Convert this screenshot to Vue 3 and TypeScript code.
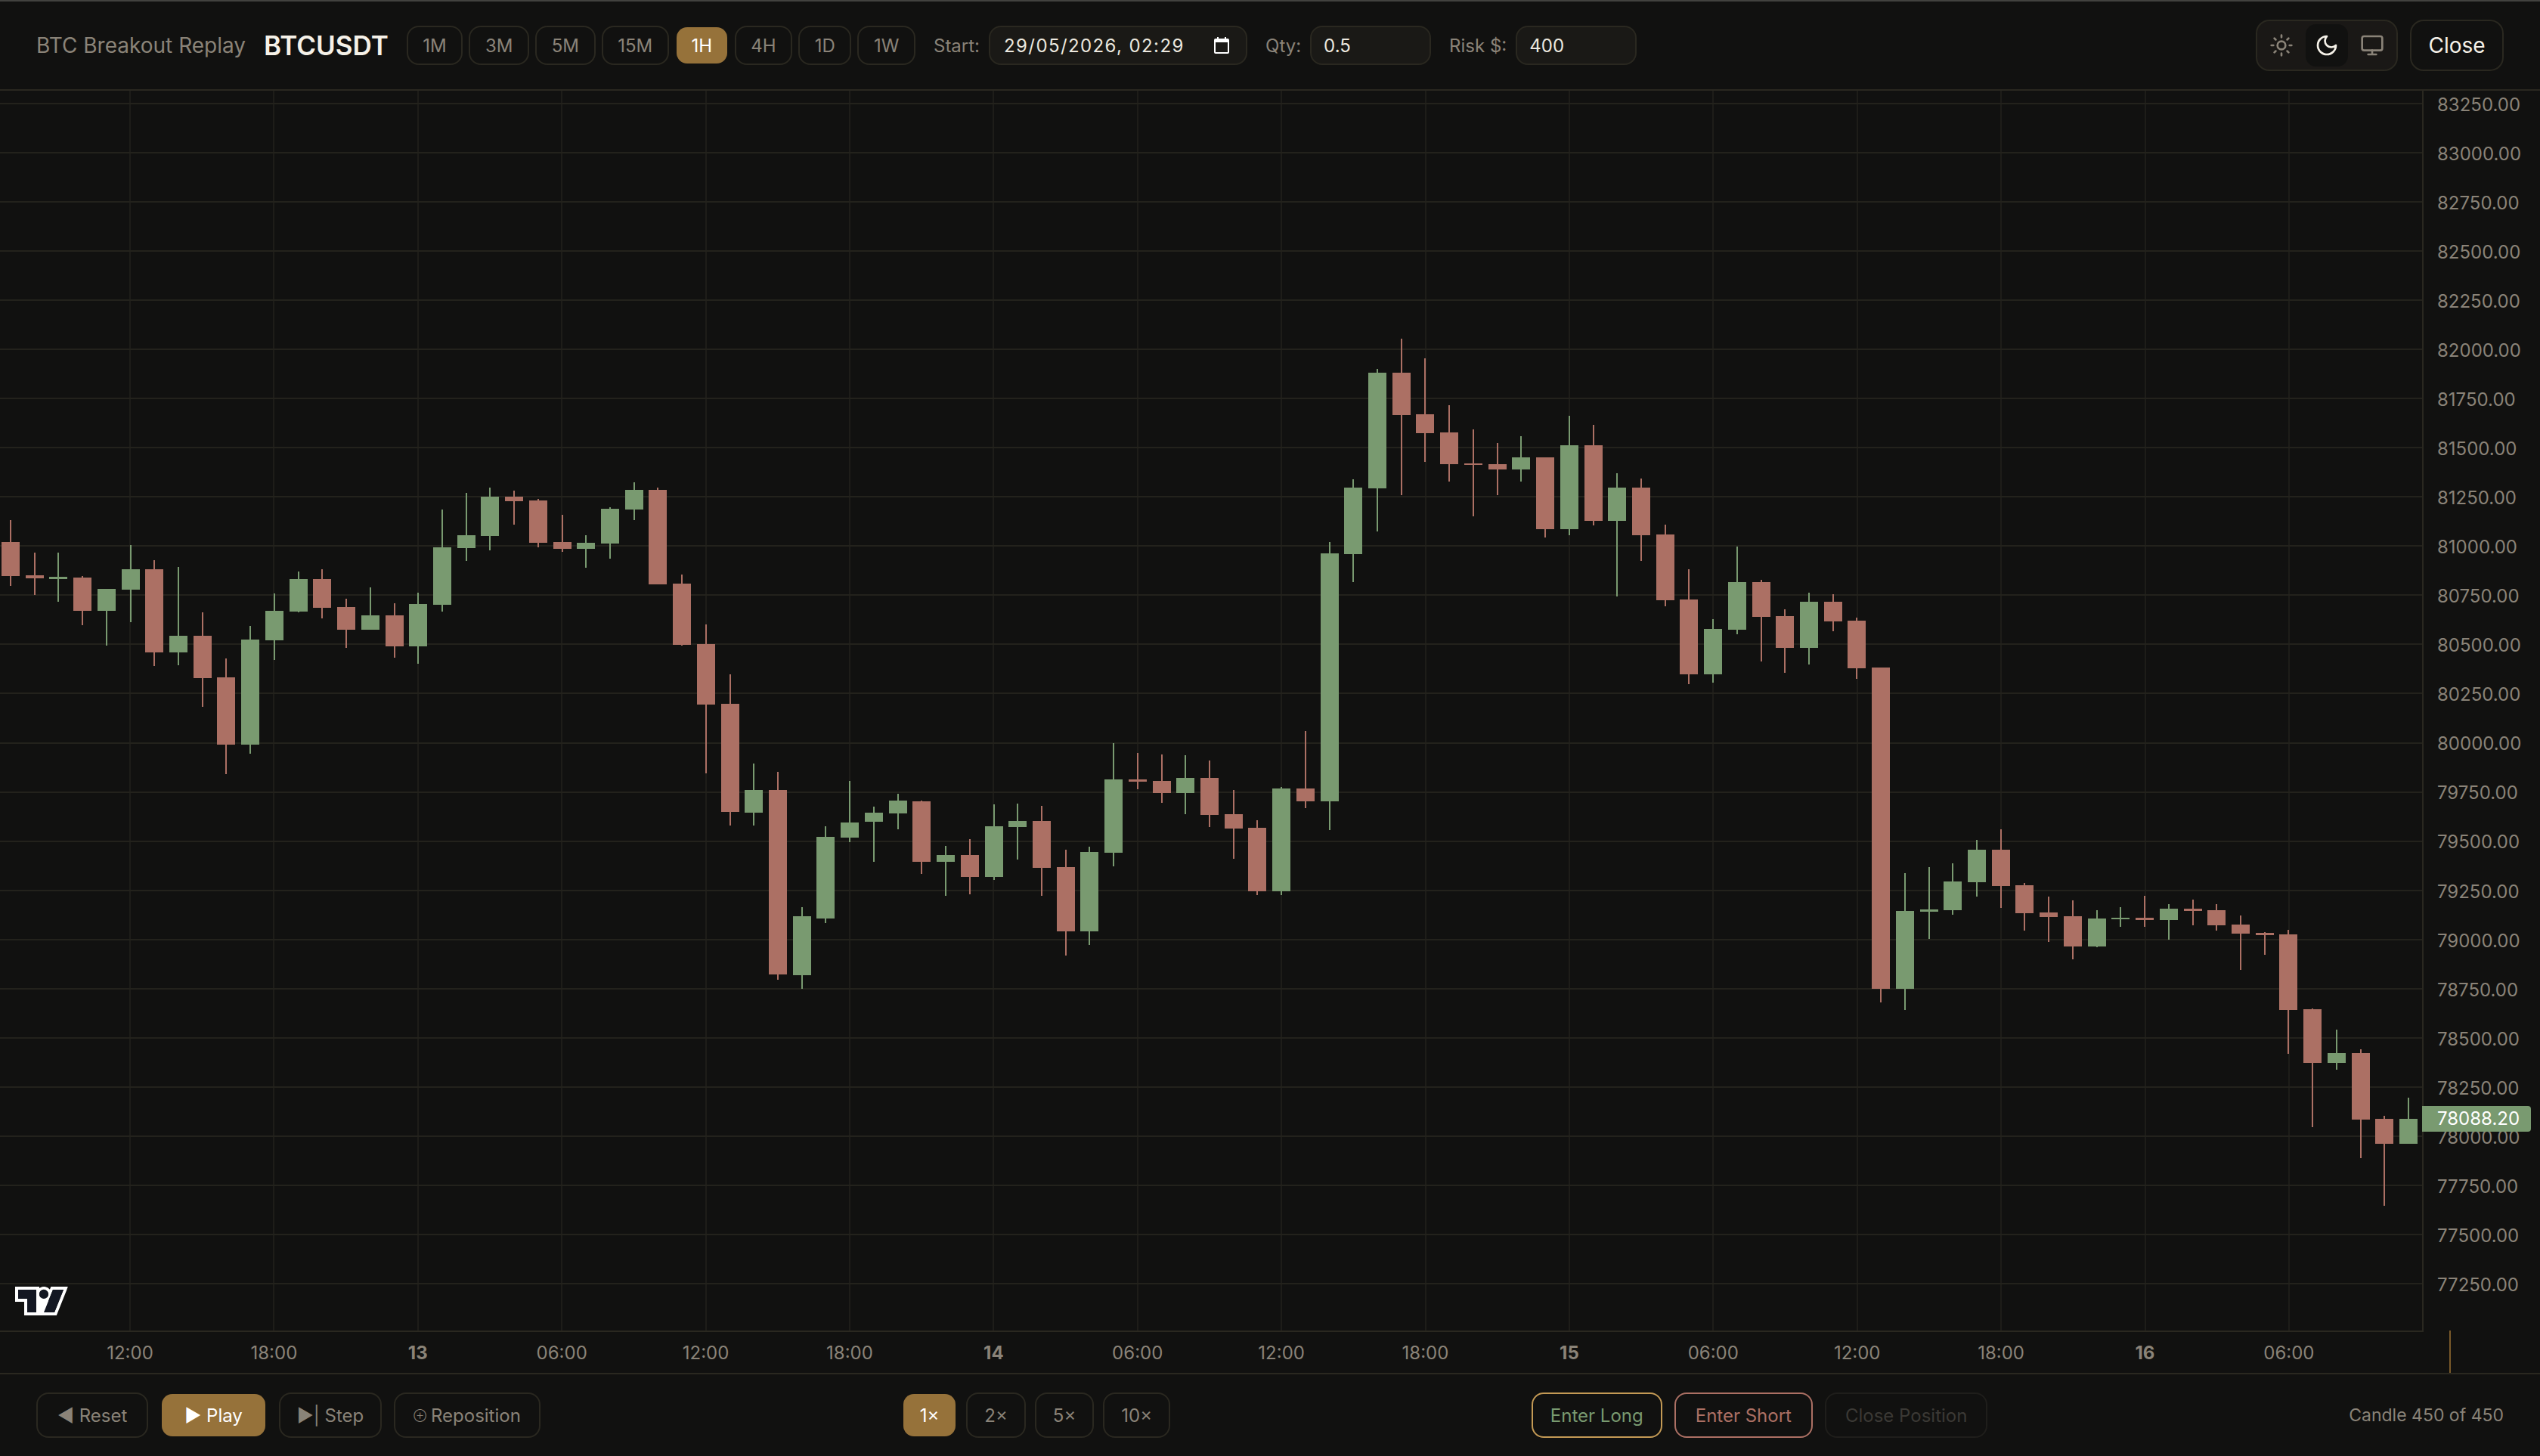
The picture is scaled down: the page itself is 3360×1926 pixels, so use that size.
<script setup lang="ts">
import { computed } from 'vue';

// [colour, wick top, body top, body bottom, wick bottom], page pixels
type Candle = [string, number, number, number, number];

const candles: Candle[] = [
  ['r', 688, 717, 762, 775], ['r', 731, 761, 765, 787], ['g', 731, 763, 766, 796], ['r', 762, 764, 808, 827],
  ['g', 779, 779, 808, 854], ['g', 721, 753, 780, 823], ['r', 741, 753, 863, 881], ['g', 750, 841, 863, 880],
  ['r', 810, 841, 897, 935], ['r', 871, 896, 985, 1024], ['g', 828, 846, 985, 997], ['g', 785, 808, 847, 873],
  ['g', 756, 766, 809, 810], ['r', 753, 766, 804, 818], ['r', 792, 803, 833, 857], ['g', 777, 814, 833, 833],
  ['r', 798, 814, 855, 870], ['g', 784, 799, 855, 878], ['g', 674, 724, 800, 809], ['g', 652, 708, 725, 742],
  ['g', 645, 657, 709, 728], ['r', 649, 657, 663, 694], ['r', 660, 662, 718, 724], ['r', 681, 717, 726, 730],
  ['g', 708, 718, 726, 751], ['g', 671, 673, 719, 739], ['g', 638, 648, 674, 688], ['r', 645, 648, 773, 773],
  ['r', 760, 772, 853, 854], ['r', 826, 852, 932, 1023], ['r', 892, 931, 1074, 1092], ['g', 1010, 1045, 1075, 1092],
  ['r', 1021, 1045, 1289, 1296], ['g', 1200, 1212, 1290, 1308], ['g', 1093, 1107, 1215, 1221], ['g', 1033, 1088, 1108, 1114],
  ['g', 1067, 1075, 1087, 1140], ['g', 1050, 1059, 1076, 1097], ['r', 1059, 1060, 1140, 1156], ['g', 1119, 1131, 1140, 1185],
  ['r', 1110, 1131, 1160, 1183], ['g', 1064, 1093, 1160, 1164], ['g', 1063, 1086, 1094, 1137], ['r', 1066, 1086, 1148, 1185],
  ['r', 1124, 1147, 1232, 1264], ['g', 1120, 1127, 1232, 1250], ['g', 983, 1031, 1128, 1146], ['r', 996, 1031, 1034, 1044],
  ['r', 998, 1033, 1049, 1062], ['g', 999, 1029, 1049, 1077], ['r', 1006, 1029, 1078, 1094], ['r', 1045, 1077, 1096, 1136],
  ['r', 1085, 1095, 1179, 1184], ['g', 1041, 1043, 1179, 1184], ['r', 967, 1043, 1060, 1069], ['g', 717, 732, 1060, 1098],
  ['g', 634, 645, 733, 770], ['g', 488, 493, 646, 703], ['r', 448, 493, 549, 655], ['r', 474, 548, 573, 611],
  ['r', 536, 572, 614, 637], ['r', 568, 613, 615, 683], ['r', 586, 614, 621, 655], ['g', 577, 605, 621, 637],
  ['r', 605, 605, 700, 711], ['g', 550, 589, 700, 708], ['r', 562, 589, 689, 695], ['g', 626, 645, 689, 789],
  ['r', 633, 645, 708, 742], ['r', 694, 707, 794, 802], ['r', 753, 793, 892, 905], ['g', 819, 832, 892, 903],
  ['g', 723, 770, 833, 839], ['r', 767, 770, 816, 875], ['r', 806, 815, 857, 890], ['g', 784, 796, 857, 879],
  ['r', 786, 796, 822, 835], ['r', 817, 821, 884, 898], ['r', 883, 883, 1308, 1326], ['g', 1155, 1205, 1308, 1336],
  ['g', 1147, 1203, 1206, 1242], ['g', 1142, 1166, 1204, 1210], ['g', 1111, 1124, 1167, 1186], ['r', 1097, 1124, 1172, 1201],
  ['r', 1168, 1171, 1208, 1231], ['r', 1186, 1207, 1213, 1246], ['r', 1191, 1212, 1252, 1269], ['g', 1204, 1215, 1252, 1253],
  ['g', 1200, 1214, 1216, 1226], ['r', 1185, 1214, 1217, 1226], ['g', 1196, 1202, 1217, 1243], ['r', 1190, 1202, 1205, 1224],
  ['r', 1196, 1204, 1224, 1231], ['r', 1211, 1223, 1235, 1283], ['r', 1233, 1234, 1237, 1263], ['r', 1230, 1236, 1336, 1394],
  ['r', 1334, 1335, 1406, 1491], ['g', 1362, 1393, 1406, 1415], ['r', 1388, 1393, 1481, 1532], ['r', 1476, 1480, 1513, 1595],
  ['g', 1452, 1480, 1513, 1513],
];

const PLOT_TOP = 120;
const TICK_SPACING = 65.04;
const CANDLE_STEP = 31.72;

const timeframes = ['1M', '3M', '5M', '15M', '1H', '4H', '1D', '1W'];
const speeds = ['1×', '2×', '5×', '10×'];

const timeLabels = [
  { text: '12:00' }, { text: '18:00' }, { text: '13', day: true }, { text: '06:00' },
  { text: '12:00' }, { text: '18:00' }, { text: '14', day: true }, { text: '06:00' },
  { text: '12:00' }, { text: '18:00' }, { text: '15', day: true }, { text: '06:00' },
  { text: '12:00' }, { text: '18:00' }, { text: '16', day: true }, { text: '06:00' },
];

const priceTicks = computed(() => {
  const ticks: string[] = [];
  for (let p = 83250; p >= 77250; p -= 250) ticks.push(p.toFixed(2));
  return ticks;
});

const gridY = computed(() => priceTicks.value.map((_, i) => Math.round(137 + TICK_SPACING * i) - PLOT_TOP));
const gridX = computed(() => timeLabels.map((_, i) => Math.round(172 + 190.4 * i)));

const bars = computed(() =>
  candles.map(([c, high, top, bottom, low], i) => ({
    x: Math.round(14 + CANDLE_STEP * i),
    fill: c === 'g' ? '#799a70' : '#ac7064',
    high: high - PLOT_TOP,
    top: top - PLOT_TOP,
    bodyHeight: bottom - top,
    wickHeight: low - high,
  })),
);

const lastPrice = 78088.2;
const lastPriceTop = computed(() => 137 + ((83250 - lastPrice) / 250) * TICK_SPACING - 17 - PLOT_TOP);
</script>

<template>
  <div class="app">
    <header class="topbar">
      <span class="title">BTC Breakout Replay</span>
      <span class="symbol">BTCUSDT</span>
      <div class="tf-group">
        <button v-for="tf in timeframes" :key="tf" class="btn tf" :class="{ active: tf === '1H' }">{{ tf }}</button>
      </div>
      <label class="field">
        <span>Start:</span>
        <div class="input date">
          <span class="date-text">29/05/2026, 02:29</span>
          <svg class="cal" width="20" height="22" viewBox="0 0 20 22">
            <path fill="#fff" d="M4 0h2v2h8V0h2v2h2a2 2 0 0 1 2 2v16a2 2 0 0 1-2 2H2a2 2 0 0 1-2-2V4a2 2 0 0 1 2-2h2V0Z" />
            <rect x="2" y="7" width="16" height="13" fill="#1a1916" />
          </svg>
        </div>
      </label>
      <label class="field">
        <span>Qty:</span>
        <div class="input num">0.5</div>
      </label>
      <label class="field">
        <span>Risk $:</span>
        <div class="input num">400</div>
      </label>
      <div class="top-right">
        <div class="theme-group">
          <button class="theme-btn">
            <svg width="32" height="32" viewBox="0 0 24 24" fill="none" stroke="currentColor" stroke-width="2" stroke-linecap="round" stroke-linejoin="round">
              <circle cx="12" cy="12" r="4" />
              <path d="M12 2v2M12 20v2M4.93 4.93l1.41 1.41M17.66 17.66l1.41 1.41M2 12h2M20 12h2M6.34 17.66l-1.41 1.41M19.07 4.93l-1.41 1.41" />
            </svg>
          </button>
          <button class="theme-btn on">
            <svg width="32" height="32" viewBox="0 0 24 24" fill="none" stroke="currentColor" stroke-width="2" stroke-linecap="round" stroke-linejoin="round">
              <path d="M12 3a6 6 0 0 0 9 9 9 9 0 1 1-9-9Z" />
            </svg>
          </button>
          <button class="theme-btn">
            <svg width="32" height="32" viewBox="0 0 24 24" fill="none" stroke="currentColor" stroke-width="2" stroke-linecap="round" stroke-linejoin="round">
              <rect x="2" y="3" width="20" height="14" rx="2" />
              <path d="M8 21h8M12 17v4" />
            </svg>
          </button>
        </div>
        <button class="close">Close</button>
      </div>
    </header>

    <section class="chart">
      <div class="plot">
        <svg width="3204" height="1640" shape-rendering="crispEdges">
          <rect v-for="x in gridX" :key="'v' + x" :x="x - 1" y="0" width="2" height="1640" fill="#1e1d19" />
          <rect v-for="y in gridY" :key="'h' + y" x="0" :y="y - 1" width="3204" height="2" fill="#23221c" />
          <g v-for="b in bars" :key="b.x" :fill="b.fill">
            <rect :x="b.x - 1" :y="b.high" width="2" :height="b.wickHeight" />
            <rect :x="b.x - 12" :y="b.top" width="24" :height="b.bodyHeight" />
          </g>
        </svg>
        <svg class="tv-logo" width="70" height="38" viewBox="0 0 35 19" fill="none">
          <path fill="#fff" fill-rule="evenodd" d="M2 0H0v10h6v9h21.4l.5-1.3 6-15 1-2.7H23.7l-.5 1.3-.2.6a5 5 0 0 0-7-.9V0H2Zm20 17h4l5.2-13 .8-2h-7l-1 2.5-.2.5-1.5 3.8-.3.7V17Zm-.8-10a3 3 0 0 0 .7-2.7A3 3 0 1 0 16.8 7h4.4ZM14 7V2H2v6h6v9h4V7h2Z" />
          <path fill="#131722" fill-rule="evenodd" d="M14 2H2v6h6v9h6V2Zm12 15h-7l6-15h7l-6 15Zm-7-9a3 3 0 1 0 0-6 3 3 0 0 0 0 6Z" />
        </svg>
      </div>
      <div class="price-axis">
        <div v-for="p in priceTicks" :key="p" class="price-row">{{ p }}</div>
        <div class="price-tag" :style="{ top: lastPriceTop + 'px' }">{{ lastPrice.toFixed(2) }}</div>
      </div>
    </section>

    <section class="time-row">
      <div class="time-axis">
        <span v-for="(t, i) in timeLabels" :key="i" class="time-cell" :class="{ day: t.day }">{{ t.text }}</span>
      </div>
      <div class="corner"><i class="corner-tick"></i></div>
    </section>

    <footer class="bottombar">
      <div class="row">
        <button class="btn ctl">◀ Reset</button>
        <button class="btn ctl play active">▶ Play</button>
        <button class="btn ctl step">▶| Step</button>
        <button class="btn ctl repo"><span class="target">⊕</span> Reposition</button>
      </div>
      <div class="row speeds">
        <button v-for="s in speeds" :key="s" class="btn speed" :class="{ active: s === '1×' }">{{ s }}</button>
      </div>
      <div class="row">
        <button class="btn ctl long">Enter Long</button>
        <button class="btn ctl short">Enter Short</button>
        <button class="btn ctl disabled">Close Position</button>
      </div>
      <span class="status">Candle 450 of 450</span>
    </footer>
  </div>
</template>

<style scoped>
.app {
  width: 3360px;
  height: 1926px;
  display: flex;
  flex-direction: column;
  background: #111110;
  border-top: 2px solid #42423f;
  box-sizing: border-box;
  font-family: Inter, 'Liberation Sans', sans-serif;
  font-size: 24px;
  color: #8a8378;
  overflow: hidden;
}

.topbar {
  height: 118px;
  box-sizing: border-box;
  flex: none;
  display: flex;
  align-items: center;
  gap: 24px;
  padding: 0 48px;
  border-bottom: 2px solid #2a2820;
}

.title {
  font-size: 28px;
}

.symbol {
  font-size: 35px;
  font-weight: 600;
  color: #f5f1e8;
}

.tf-group {
  display: flex;
  gap: 8px;
}

.btn {
  box-sizing: border-box;
  display: flex;
  align-items: center;
  justify-content: center;
  font: inherit;
  font-size: 24px;
  color: #8a8378;
  background: transparent;
  border: 2px solid #2a2820;
  border-radius: 16px;
  white-space: nowrap;
}

.btn.active {
  background: #96723a;
  background-clip: padding-box;
  border-color: transparent;
  color: #fff;
}

.tf {
  height: 52px;
  padding: 0 19.6px;
}

.field {
  display: flex;
  align-items: center;
  gap: 12px;
}

.input {
  box-sizing: border-box;
  height: 52px;
  display: flex;
  align-items: center;
  background: #1a1916;
  border: 2px solid #2a2820;
  border-radius: 16px;
  color: #ece8df;
}

.date {
  width: 342px;
  padding: 0 22px 0 18px;
  justify-content: space-between;
}

.date-text {
  letter-spacing: 1.4px;
}

.num {
  width: 160px;
  padding: 0 16px;
}

.top-right {
  margin-left: auto;
  display: flex;
  gap: 16px;
}

.theme-group {
  display: flex;
  gap: 4px;
  padding: 4px;
  background: #1a1816;
  border: 2px solid #2a2820;
  border-radius: 18px;
}

.theme-btn {
  width: 56px;
  height: 56px;
  padding: 0;
  display: flex;
  align-items: center;
  justify-content: center;
  background: transparent;
  border: none;
  border-radius: 14px;
  color: #8a8378;
}

.theme-btn.on {
  background: #111110;
  color: #f5f1e8;
}

.close {
  box-sizing: border-box;
  width: 124px;
  height: 68px;
  font: inherit;
  font-size: 28px;
  color: #f5f1e8;
  background: transparent;
  border: 2px solid #2a2820;
  border-radius: 18px;
}

.chart {
  flex: 1;
  display: flex;
  min-height: 0;
}

.plot {
  position: relative;
  flex: 1;
}

.plot > svg:first-child {
  display: block;
}

.tv-logo {
  position: absolute;
  left: 20px;
  bottom: 20px;
}

.price-axis {
  position: relative;
  flex: none;
  width: 156px;
  box-sizing: border-box;
  padding: 5px 0 0 18px;
  border-left: 2px solid #2a2820;
}

.price-row {
  height: 65.04px;
  line-height: 28px;
}

.price-tag {
  position: absolute;
  left: -2px;
  width: 144px;
  height: 34px;
  box-sizing: border-box;
  padding-left: 20px;
  line-height: 34px;
  background: #799a70;
  border-radius: 0 4px 4px 0;
  color: #fff;
}

.time-row {
  height: 56px;
  flex: none;
  display: flex;
}

.time-axis {
  width: 3206px;
  box-sizing: border-box;
  padding-left: 76.8px;
  display: flex;
  align-items: center;
  border-top: 2px solid #2a2820;
}

.time-cell {
  flex: none;
  width: 190.4px;
  text-align: center;
}

.time-cell.day {
  font-weight: 700;
}

.corner {
  flex: 1;
  display: flex;
  padding-left: 34px;
}

.corner-tick {
  width: 2px;
  background: #7a5a2a;
}

.bottombar {
  flex: none;
  height: 108px;
  box-sizing: content-box;
  display: flex;
  align-items: center;
  justify-content: space-between;
  padding: 0 48px;
  border-top: 2px solid #2a2820;
}

.row {
  display: flex;
  gap: 16px;
}

.speeds {
  gap: 12px;
}

.ctl {
  height: 60px;
  padding: 0 26px;
}

.play {
  padding: 0 30px;
}

.step {
  padding: 0 22px;
}

.repo {
  padding: 0 24px;
}

.target {
  font-size: 12px;
  margin-right: 6px;
}

.speed {
  height: 60px;
  padding: 0 22px;
}

.long {
  padding: 0 23px;
  border-color: #c49a55;
  color: #799a70;
}

.short {
  border-color: #ac7064;
  color: #ac7064;
}

.disabled {
  padding: 0 25px;
  border-color: #1f1e1b;
  color: #3b3935;
}

.status {
  font-size: 23px;
}
</style>

<style>
html,
body {
  margin: 0;
  background: #111110;
}
</style>
